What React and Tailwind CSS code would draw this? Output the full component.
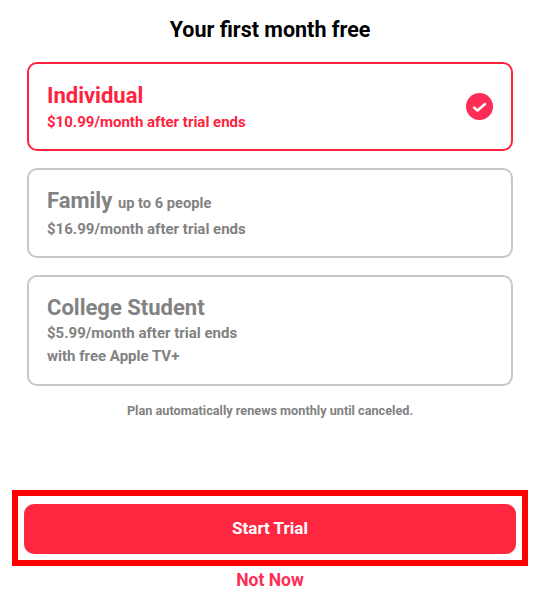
const plans = [
  { name: "Individual", price: "$10.99/month after trial ends", selected: true },
  { name: "Family", note: "up to 6 people", price: "$16.99/month after trial ends" },
  { name: "College Student", price: "$5.99/month after trial ends", extra: "with free Apple TV+" },
];

const cardHeights = { Individual: "h-[89px]", Family: "h-[90px]", "College Student": "h-[111px]" };

const PlanCard = ({ plan }) => {
  const active = plan.selected;
  return (
    <div
      className={`flex items-center justify-between rounded-[10px] border-2 px-[18px] ${
        active ? "border-[#ff2340] text-[#ff2340]" : "border-[#c8c8cc] text-[#828282]"
      } ${cardHeights[plan.name]}`}
    >
      <div className={plan.extra ? "pb-[1px]" : ""}>
        <div className="text-[22px] leading-[28px] font-bold">
          {plan.name}
          {plan.note && <span className="ml-[2px] text-[14.7px] font-bold"> {plan.note}</span>}
        </div>
        <div className={`text-[15px] leading-[20px] font-bold ${plan.extra ? "mt-[1px]" : "mt-[2px]"}`}>{plan.price}</div>
        {plan.extra && <div className="mt-[3px] text-[15px] leading-[20px] font-bold">{plan.extra}</div>}
      </div>
      {active && (
        <svg width="27" height="27" viewBox="0 0 27 27">
          <circle cx="13.5" cy="13.5" r="13.5" fill="#ff2d55" />
          <path d="M8 14.5l3.5 3 7.5-6.5" fill="none" stroke="#fff" strokeWidth="2.4" strokeLinecap="round" strokeLinejoin="round" />
        </svg>
      )}
    </div>
  );
};

export default function App() {
  return (
    <div className="h-[602px] w-[540px] bg-white font-['Roboto',sans-serif]">
      <h1 className="pt-[16px] text-center text-[21.5px] leading-[28px] font-bold text-black">Your first month free</h1>
      <div className="mt-[18px] flex flex-col gap-[17px] px-[27px]">
        {plans.map((plan) => (
          <PlanCard key={plan.name} plan={plan} />
        ))}
      </div>
      <p className="mt-[17px] text-center text-[12.7px] leading-[16px] font-bold text-[#828282]">
        Plan automatically renews monthly until canceled.
      </p>
      <div className="mx-3 mt-[71px] border-[6px] border-[#ff0000] px-[6px] pt-[8px] pb-[6px]">
        <button className="h-[50px] w-full rounded-[10px] bg-[#ff2640] text-[17px] font-bold text-white">Start Trial</button>
      </div>
      <div className="mt-[2px] text-center text-[17.5px] leading-[24px] font-bold text-[#ff2d55]">Not Now</div>
    </div>
  );
}
